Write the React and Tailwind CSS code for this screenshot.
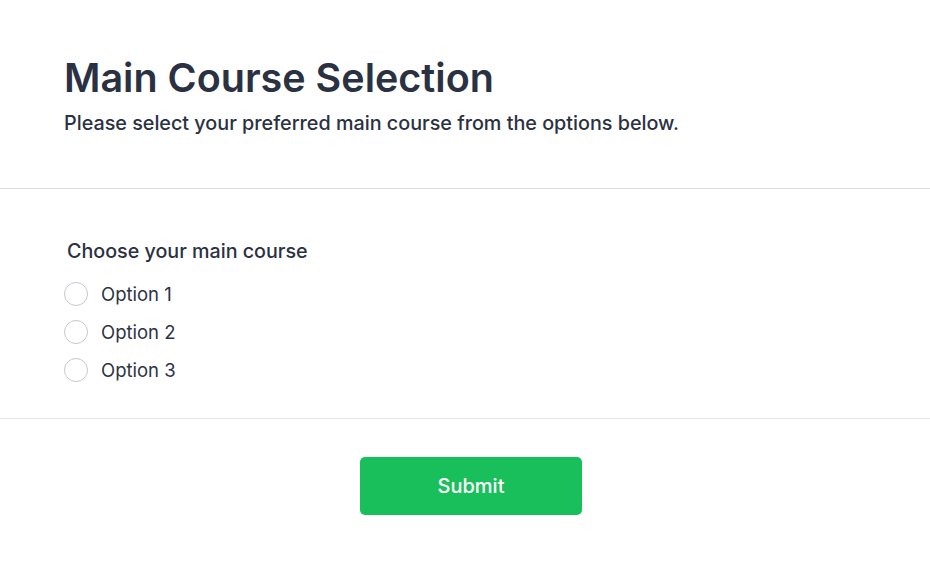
import React, { useState } from "react";

export default function App() {
  const [choice, setChoice] = useState(null);
  const options = ["Option 1", "Option 2", "Option 3"];

  return (
    <div
      className="min-h-screen bg-white text-[#2b3040]"
      style={{ fontFamily: "Inter, 'Noto Sans', sans-serif" }}
    >
      <header className="px-16 pt-[54px] pb-[51px] border-b border-[#dcdee6]">
        <h1 className="text-[39.5px] leading-[48px] font-semibold text-[#2a3142]">
          Main Course Selection
        </h1>
        <p className="mt-[7px] text-[19.75px] leading-[28px] font-medium text-[#2a3142]">
          Please select your preferred main course from the options below.
        </p>
      </header>

      <section className="px-16 pt-[48px] pb-[36px] border-b border-[#e2e4ea]">
        <div className="pl-[3px] text-[19.7px] leading-[28px] font-medium text-[#2a3142]">
          Choose your main course
        </div>
        <div className="mt-[17px] flex flex-col gap-[14px]">
          {options.map((o) => (
            <label key={o} className="flex items-center gap-[13px] cursor-pointer">
              <input
                type="radio"
                name="main"
                checked={choice === o}
                onChange={() => setChoice(o)}
                className="appearance-none w-6 h-6 rounded-full border border-[#c4c7d2] bg-white checked:border-[7px] checked:border-[#19bf5b]"
              />
              <span className="text-[18.5px] leading-6 text-[#2d3344]">{o}</span>
            </label>
          ))}
        </div>
      </section>

      <div className="flex justify-center pt-[38px] pl-3">
        <button className="w-[222px] h-[58px] rounded-[5px] bg-[#19bf5b] text-white text-xl font-medium">
          Submit
        </button>
      </div>
    </div>
  );
}
